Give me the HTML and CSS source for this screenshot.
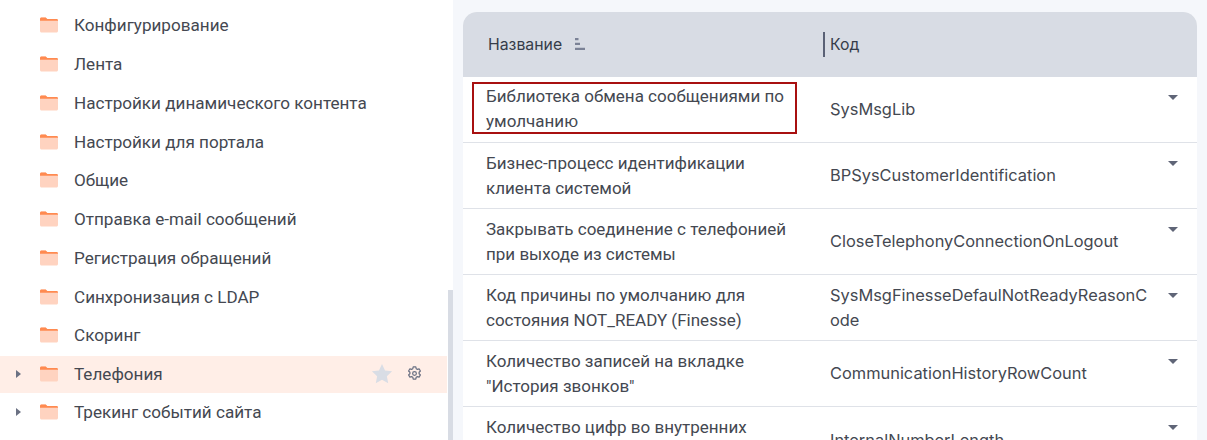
FILE: index.html
```html
<!DOCTYPE html>
<html lang="ru">
<head>
<meta charset="utf-8">
<title>Системные настройки</title>
<link rel="stylesheet" href="styles.css">
</head>
<body>
<svg width="0" height="0" class="defs">
  <defs>
    <symbol id="folder" viewBox="0 0 18 16">
      <path d="M0 2C0 1 .7.5 1.500.5h4.200l1.600 1.600h9.200c.8 0 1.500.6 1.500 1.300V14c0 .9-.7 1.500-1.500 1.500h-15C.7 15.500 0 14.900 0 14z" fill="#ffd3c0"/>
      <path d="M0 2C0 1 .7.5 1.500.5h4.200l1.600 1.600h9.200c.8 0 1.500.6 1.500 1.300v.4H0z" fill="#ff8a50"/>
    </symbol>
  </defs>
</svg>
<div class="page">
  <aside class="tree">
    <ul class="tree-list">
      <li class="tree-row"><span class="caret-slot"></span><svg class="folder"><use href="#folder"/></svg><span>Конфигурирование</span></li>
      <li class="tree-row"><span class="caret-slot"></span><svg class="folder"><use href="#folder"/></svg><span>Лента</span></li>
      <li class="tree-row"><span class="caret-slot"></span><svg class="folder"><use href="#folder"/></svg><span>Настройки динамического контента</span></li>
      <li class="tree-row"><span class="caret-slot"></span><svg class="folder"><use href="#folder"/></svg><span>Настройки для портала</span></li>
      <li class="tree-row"><span class="caret-slot"></span><svg class="folder"><use href="#folder"/></svg><span>Общие</span></li>
      <li class="tree-row"><span class="caret-slot"></span><svg class="folder"><use href="#folder"/></svg><span>Отправка e-mail сообщений</span></li>
      <li class="tree-row"><span class="caret-slot"></span><svg class="folder"><use href="#folder"/></svg><span>Регистрация обращений</span></li>
      <li class="tree-row"><span class="caret-slot"></span><svg class="folder"><use href="#folder"/></svg><span>Синхронизация с LDAP</span></li>
      <li class="tree-row"><span class="caret-slot"></span><svg class="folder"><use href="#folder"/></svg><span>Скоринг</span></li>
      <li class="tree-row active"><span class="caret-slot"><i class="caret"></i></span><svg class="folder"><use href="#folder"/></svg><span class="grow">Телефония</span>
        <svg class="star" viewBox="0 0 24 24"><path d="M12 1l3.300 7.200 7.700.9-5.700 5.300 1.500 7.600L12 18.200 5.200 22l1.500-7.600L1 9.100l7.700-.9z" fill="#d9dde5"/></svg>
        <svg class="gear" viewBox="0 0 16 16"><path d="M6.600 1h2.800l.4 1.900 1.300.7 1.800-.6 1.400 2.400-1.400 1.300v1.500l1.400 1.300-1.400 2.400-1.800-.6-1.300.7-.4 1.900H6.600l-.4-1.900-1.300-.7-1.800.6-1.400-2.400 1.400-1.300V6.700L1.700 5.400 3.100 3l1.800.6 1.300-.7z" fill="none" stroke="#6b7183" stroke-width="1.300" stroke-linejoin="round"/><circle cx="8" cy="8" r="2" fill="none" stroke="#6b7183" stroke-width="1.300"/></svg>
      </li>
      <li class="tree-row"><span class="caret-slot"><i class="caret"></i></span><svg class="folder"><use href="#folder"/></svg><span>Трекинг событий сайта</span></li>
    </ul>
    <div class="scrollbar"></div>
  </aside>
  <main class="content">
    <div class="table">
      <div class="head">
        <div class="col-name head-name">Название
          <svg class="sort" viewBox="0 0 10 12"><path d="M0 0h3.500v2.200H0zM0 4.800h5v2.200H0zM0 9.800h10V12H0z" fill="#7b8296"/></svg>
        </div>
        <div class="head-code"><span class="divider"></span>Код</div>
      </div>
      <div class="row"><div class="col-name"><span class="marked">Библиотека обмена сообщениями по умолчанию</span></div><div class="col-code">SysMsgLib</div><i class="drop"></i></div>
      <div class="row"><div class="col-name">Бизнес-процесс идентификации клиента системой</div><div class="col-code">BPSysCustomerIdentification</div><i class="drop"></i></div>
      <div class="row"><div class="col-name">Закрывать соединение с телефонией при выходе из системы</div><div class="col-code">CloseTelephonyConnectionOnLogout</div><i class="drop"></i></div>
      <div class="row"><div class="col-name">Код причины по умолчанию для состояния NOT_READY (Finesse)</div><div class="col-code">SysMsgFinesseDefaulNotReadyReasonCode</div><i class="drop"></i></div>
      <div class="row"><div class="col-name">Количество записей на вкладке "История звонков"</div><div class="col-code">CommunicationHistoryRowCount</div><i class="drop"></i></div>
      <div class="row"><div class="col-name">Количество цифр во внутренних номерах</div><div class="col-code">InternalNumberLength</div><i class="drop"></i></div>
    </div>
  </main>
</div>
</body>
</html>
```
FILE: styles.css
```css
* { box-sizing: border-box; }
html, body { margin: 0; height: 100%; overflow: hidden; background: #fff; }
.defs { position: absolute; }
.page { display: flex; height: 440px; overflow: hidden; }

.tree { position: relative; width: 453px; flex: none; background: #fff; }
.tree-list { list-style: none; margin: 6px 0 0; padding: 0; width: 447px; }
.tree-row {
  display: flex; align-items: center; height: 38.75px;
  font: 17.100px/20px Roboto, sans-serif; color: #444851;
}
.tree-row.active { background: #ffeee7; height: 37px; margin: 1px 0 0; padding-bottom: 1px; }
.caret-slot { width: 40px; flex: none; padding-left: 16px; display: flex; }
.caret { width: 0; height: 0; border-left: 5px solid #6b7183; border-top: 4px solid transparent; border-bottom: 4px solid transparent; }
.folder { width: 18px; height: 16px; flex: none; margin-right: 16px; }
.grow { flex: 1; }
.star { width: 22px; height: 22px; margin-right: 14px; }
.gear { width: 15px; height: 15px; margin-right: 25px; }
.scrollbar { position: absolute; right: 0; top: 290px; bottom: 0; width: 5px; background: #d8dce4; }

.content { flex: 1; background: #f5f7fb; padding: 12px 10px 0; min-width: 0; }
.table { width: 734px; background: #fff; border-radius: 14px 14px 0 0; overflow: hidden; }
.head { display: flex; align-items: center; height: 65px; background: #d8dce4; font: 400 15.800px/20px Inter, sans-serif; color: #363c4a; }
.row {
  position: relative; display: flex; align-items: center; height: 66.100px;
  border-bottom: 1px solid #dfe2e8;
  font: 400 17px/25px Roboto, sans-serif; color: #444851;
}
.col-name { width: 367px; flex: none; padding: 0 29px 0 23px; }
.col-code { flex: 1; padding-right: 47px; overflow-wrap: anywhere; font: 400 16.400px/25px Inter, sans-serif; }
.head-name { display: flex; align-items: center; gap: 13px; padding-left: 25px; padding-right: 0; width: 360px; }
.head-code { display: flex; align-items: center; }
.divider { width: 2px; height: 25px; background: #5a6175; margin-right: 5px; }
.sort { width: 10px; height: 12px; margin-top: -1px; }
.marked { display: block; width: 325px; height: 52px; margin: 0 0 3px -14px; padding: 0 0 0 12px; border: 2px solid #a81010; }
.drop { position: absolute; right: 19px; top: 18px; width: 0; height: 0; border-top: 5px solid #5f6577; border-left: 5px solid transparent; border-right: 5px solid transparent; }
```
